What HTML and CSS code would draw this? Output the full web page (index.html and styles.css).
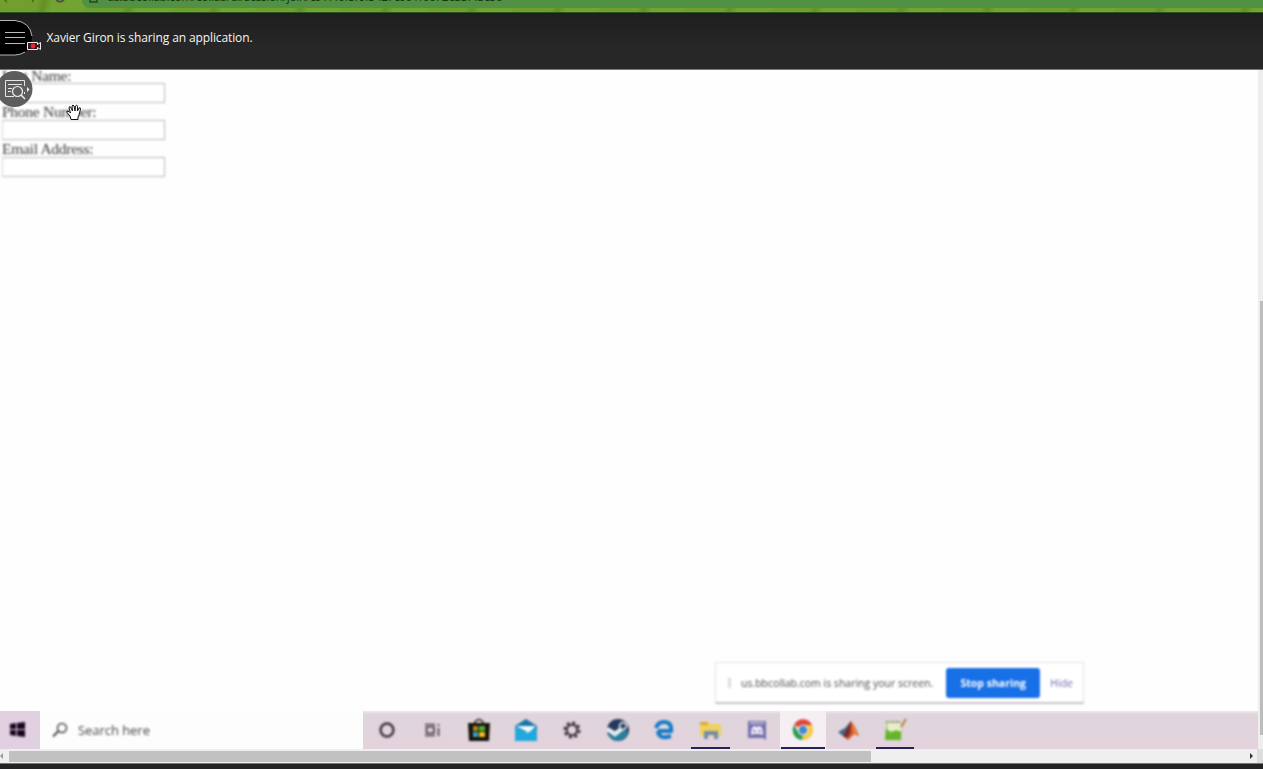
FILE: index.html
```html
<!DOCTYPE html>
<html lang="en">
<head>
<meta charset="utf-8">
<title>Shared application</title>
<link rel="stylesheet" href="styles.css">
</head>
<body>
<div class="browser">
  <svg class="nav-icons" width="82" height="12" viewBox="0 0 82 12" fill="none" stroke="#48671e" stroke-width="1.5"><path d="M4-4Q4 0 7 2M34-4Q34 0 32 2"/><path d="M56-1Q59 4 64 0" stroke="#4b5549" stroke-width="2"/></svg>
  <div class="address"><svg width="9" height="4" viewBox="0 0 9 4"><path d="M1 0V2H8V0" fill="none" stroke="#24481f" stroke-width="1.5"/></svg><span class="url">us.bbcollab.com/collab/ui/session/join/c917f6f5f0f5427c991f6672e33f43c56</span></div>
</div>
<header class="topbar">
  <svg class="menu" width="44" height="40" viewBox="0 0 44 40">
    <path d="M-2 1.5H15Q31 3 32 19Q31 35 15 36H-2Z" fill="#000" />
    <path d="M-2 1.5H15Q30 3 32 17M25 33Q20 36 15 36H-2" fill="none" stroke="#b5b5b5"/>
    <path d="M5 13.5H25M5 18.5H25M5 24.5H25" stroke="#bbb"/>
    <path d="M27.5 23.5H37.5V25.5L40.5 23.5V30.5L37.5 28.5V30.5H27.5Z" fill="#39191c" stroke="#eee"/>
    <circle cx="33" cy="27" r="2.4" fill="#ed2532"/>
  </svg>
  <span class="sharing-title">Xavier Giron is sharing an application.</span>
</header>
<main class="viewport">
  <div class="screen">
    <form class="form">
      <label>Last Name:</label><div class="field"></div>
      <label>Phone Number:</label><div class="field"></div>
      <label>Email Address:</label><div class="field"></div>
    </form>
    <div class="share-bar"><i class="grip"></i><span class="share-text">us.bbcollab.com is sharing your screen.</span><b class="stop">Stop sharing</b><span class="hide">Hide</span></div>
    <div class="taskbar">
      <div class="start"><svg width="16" height="16" viewBox="0 0 16 16"><path d="M0 2 6 1V7H0ZM7 1 15 0V7H7ZM0 8H6V14L0 13ZM7 8H15V15L7 14Z" fill="#17051d"/></svg></div>
      <div class="search"><svg width="18" height="17" viewBox="0 0 18 17"><circle cx="11" cy="6" r="4.5" fill="none" stroke="#444" stroke-width="1.5"/><path d="M7.500 9 2 14.500" stroke="#444" stroke-width="1.800"/></svg><span>Search here</span></div>
      <div class="apps">
        <div class="app"><svg viewBox="0 0 24 24"><circle cx="12" cy="12" r="6.4" fill="none" stroke="#41313f" stroke-width="2.500"/></svg></div>
        <div class="app"><svg viewBox="0 0 24 24"><path d="M4 6.500H14M4 17.500H14M5.500 9H13V15H5.500ZM17.500 6V8M17.500 10V18" fill="none" stroke="#4c3d4c" stroke-width="1.700"/></svg></div>
        <div class="app"><svg viewBox="0 0 24 24"><path d="M8 6V4Q12-1 16 4V6" fill="none" stroke="#514a41" stroke-width="2"/><path d="M1 5H23L22 23H2Z" fill="#17120b"/><path d="M6 8H11V13H6Z" fill="#a58a20"/><path d="M12 8H18V13H12Z" fill="#58ad31"/><path d="M6 14H11V19H6Z" fill="#38a5bd"/><path d="M12 14H18V19H12Z" fill="#efc321"/></svg></div>
        <div class="app"><svg viewBox="0 0 24 24"><path d="M1 8 12 1 23 8V14H1Z" fill="#1674a6"/><path d="M2 8H22L15 15Z" fill="#edfaff"/><path d="M1 8 13 15 23 10V23H1Z" fill="#21a9dd"/></svg></div>
        <div class="app"><svg viewBox="0 0 24 24" fill="none" stroke="#413241"><circle cx="12" cy="12" r="7.200" stroke-width="2.700" stroke-dasharray="3.100 2.550"/><circle cx="12" cy="12" r="5.200" stroke-width="2"/></svg></div>
        <div class="app"><svg viewBox="0 0 24 24"><circle cx="12" cy="12" r="11" fill="#26395b"/><path d="M2 16 10 16 20 12 22 15Q19 23 11 23Q5 22 2 16Z" fill="#287f9c"/><path d="M1 11 9 16 18 9" fill="none" stroke="#e4edf2" stroke-width="4.500"/><circle cx="17" cy="8" r="3.500" fill="#314765" stroke="#edf3f4" stroke-width="1.500"/></svg></div>
        <div class="app"><svg viewBox="0 0 24 24"><path d="M6 13H19Q20 4 12 4Q6 4 4 10M6 13Q7 22 19 18" fill="none" stroke="#147bc6" stroke-width="4"/></svg></div>
        <div class="app open"><svg viewBox="0 0 24 24"><path d="M2 4H10L12 6H23V18H2Z" fill="#efd25c"/><path d="M2 4H10V7H2Z" fill="#d6ac31"/><path d="M6 21V13H20V21H16V17H10V21Z" fill="#718bad"/></svg></div>
        <div class="app"><svg viewBox="0 0 24 24"><path d="M3 3H21V22L18 20H3Z" fill="#7472ae"/><path d="M5 4H19V6H5Z" fill="#b7b2d6"/><path d="M6 17Q6 9 9 8L12 9 15 8Q18 9 18 17L15 16H9Z" fill="#f1ecfa"/><path d="M9.500 12V14M14.500 12V14" stroke="#7472ae" stroke-width="2"/></svg></div>
        <div class="app open active"><svg viewBox="0 0 24 24"><path d="M12 12 3 7A10 10 0 0 1 21 7H12Z" fill="#df4638"/><path d="M12 12H22A10 10 0 0 1 11 22Z M12 7H21Q24 16 17 20L12 22 16 14Z" fill="#f5ca42"/><path d="M3 7 8 15 12 16 11 22A10 10 0 0 1 3 7Z" fill="#2d9a51"/><circle cx="12" cy="12" r="5.300" fill="#eff3f6"/><circle cx="12" cy="12" r="4.200" fill="#4385cf"/></svg></div>
        <div class="app"><svg viewBox="0 0 24 24"><path d="M1 14 8 10 14 3 12 15 6 18Z" fill="#41678a"/><path d="M6 18 14 3 18 9 22 18 17 16 11 22Z" fill="#d4572a"/><path d="M6 18 14 3 13 15 10 20Z" fill="#732b2c"/><path d="M15 5 17 15 20 16Z" fill="#f39a3d"/></svg></div>
        <div class="app open"><svg viewBox="0 0 24 24"><path d="M4 3 19 5 18 22 2 21Z" fill="#a9cf51"/><path d="M5 3 18 5V13H4Z" fill="#e7edcf"/><path d="M3 10 8 15 13 12 18 14V22H2Z" fill="#65b52c"/><path d="M3 4H17" stroke="#8c956e" stroke-width="2" stroke-dasharray="2 1"/><path d="M23 1 18 9" stroke="#b5824c" stroke-width="2"/></svg></div>
      </div>
    </div>
  </div>
  <div class="vscroll"><div class="vthumb"></div></div>
  <svg class="inspect" width="34" height="38" viewBox="0 0 34 38"><circle cx="14.500" cy="19" r="18" fill="#555" fill-opacity=".95"/><path d="M14 26.500H5.500V10.500H24.500V16M24.500 22V24M8 14.500H22M8 18.500H12M8 21.500H11" fill="none" stroke="#e6e6e6"/><circle cx="17.500" cy="21.500" r="5" fill="none" stroke="#eee" stroke-width="1.200"/><path d="m21 25 4 4" stroke="#eee" stroke-width="1.500"/><path d="m27 17 2.500 2.500L27 22Z" fill="#eee"/></svg>
  <svg class="hand" width="16" height="17" viewBox="0 0 16 17"><path d="M5 15.500 4 12 1 8.500Q0 6 3 7.500L4.500 9 3 4Q3 2 4.500 3L6.500 7 6 2Q7 0 8 2L9 7 9.500 2Q11 0 11.500 2.500V7L13 4Q14.500 3 14.500 5L13 11 12 13V15.500Z" fill="white" stroke="#111"/></svg>
</main>
<div class="hscroll"><svg width="9" height="14" viewBox="0 0 9 14"><path d="M0 7 3 4V10Z" fill="#999"/></svg><div class="hthumb"></div><svg class="right" width="8" height="14" viewBox="0 0 8 14"><path d="m1 4 3 3-3 3Z" fill="#333"/></svg><div class="corner"></div></div>
<footer class="footer"></footer>
</body>
</html>
```
FILE: styles.css
```css
* { box-sizing: border-box; }
body { margin: 0; width: 1263px; height: 769px; overflow: hidden; display: flex; flex-direction: column; font-family: "Open Sans", sans-serif; background: #fff; }
.browser { height: 13px; flex: none; display: flex; overflow: hidden; background: repeating-linear-gradient(105deg, #709f2d 0 37px, #629027 43px, #73a331 51px 83px); border-bottom: 1px solid #275521; }
.nav-icons { flex: none; }
.address { height: 8px; flex: 1; display: flex; overflow: hidden; background: #509143; border-bottom-left-radius: 9px; padding-left: 7px; color: #16380f; }
.url { flex: none; height: 14px; margin: -10px 0 0 9px; line-height: 14px; font-size: 12px; letter-spacing: -.41px; white-space: nowrap; }
.topbar { height: 57px; flex: none; display: flex; background: linear-gradient(#1e1e1e, #272727 60%); border-bottom: 1px solid #777; }
.menu { flex: none; margin-top: 6px; }
.sharing-title { margin: 16px 0 0 2.500px; font-size: 12px; letter-spacing: -.11px; line-height: 17px; color: #f4f4f4; white-space: nowrap; }
.viewport { position: relative; flex: none; height: 679px; display: flex; overflow: hidden; }
.screen { width: 1258px; height: 679px; flex: none; display: flex; flex-direction: column; overflow: hidden; background: #fefefe; }
.form { height: 592px; flex: none; padding: 0 0 0 2px; font: 15.500px/18px "Liberation Serif", serif; color: #3d393d; filter: blur(.8px); }
.form label { display: block; height: 17px; white-space: nowrap; letter-spacing: -.27px; }
.form label:first-child { height: 13px; line-height: 12px; }
.field { width: 163px; height: 20px; border: 1px solid #bdb8bd; border-left-color: #dcd8dc; background: #fff; }
.share-bar { width: 369px; height: 42px; flex: none; margin-left: 715px; padding: 0 10px 0 12px; display: flex; align-items: center; background: #fff; border: 1px solid #e6e1e7; border-bottom: 2px solid #c8c2cb; filter: blur(.8px); font-size: 10.500px; color: #4f4b4f; white-space: nowrap; }
.grip { width: 3px; height: 10px; background: #ddd; }
.share-text { width: 206px; margin-left: 10px; letter-spacing: 0; }
.stop { width: 94px; height: 30px; flex: none; line-height: 30px; text-align: center; border-radius: 3px; color: #fff; background: #1870e6; font-size: 10.500px; }
.hide { margin-left: 10px; color: #706aae; }
.taskbar { height: 38px; flex: none; margin-top: 7px; display: flex; background: linear-gradient(#eee9ed, #e0d5dc 8%, #e2d2dc); }
.start { width: 40px; display: flex; align-items: center; padding-left: 10px; background: #e0d0e1; }
.start svg, .search svg, .search span, .app svg { filter: blur(.8px); }
.search { width: 323px; display: flex; align-items: center; padding-left: 11px; background: #fefdfe; color: #4b474c; font-size: 13px; letter-spacing: -.05px; }
.search svg { flex: none; }
.search span { margin-left: 9px; line-height: 20px; white-space: nowrap; }
.apps { display: flex; padding-left: 1px; }
.app { width: 46.200px; height: 38px; display: flex; justify-content: center; align-items: center; position: relative; }
.app svg { width: 24px; height: 24px; display: block; }
.app.active { background: #f5eff4; }
.app.open::after { content: ""; position: absolute; left: 4px; right: 4px; bottom: 0; height: 2px; background: #28205b; }
.app.active::after { left: 1px; right: 1px; }
.vscroll { width: 5px; height: 679px; background: #eee; padding: 231px 0 0 2px; }
.vthumb { width: 3px; height: 434px; background: #bcbcbc; }
.inspect { position: absolute; left: 0; top: 0; }
.hand { position: absolute; left: 66px; top: 34px; }
.hscroll { height: 14px; flex: none; display: flex; background: #efefef; }
.hthumb { width: 862px; height: 11px; margin-top: 2px; background: #c1c1c1; }
.right { margin-left: 378px; }
.corner { flex: 1; background: #ddd; }
.footer { height: 6px; flex: none; background: #232225; border-top: 1px solid #777; }
```
